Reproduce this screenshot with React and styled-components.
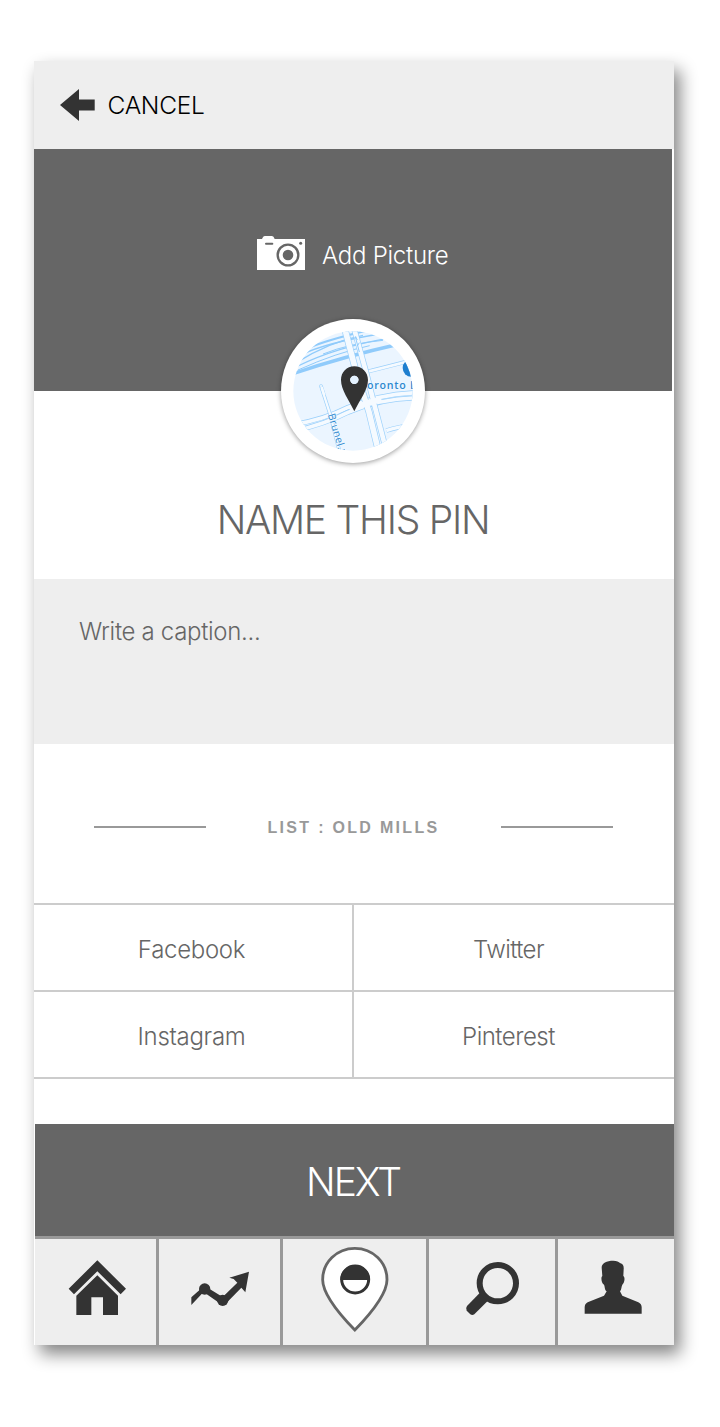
import React from "react";
import styled, { createGlobalStyle } from "styled-components";

const GlobalStyle = createGlobalStyle`
  * { box-sizing: border-box; }
  body { margin: 0; background: #fff; }
  button { font: inherit; color: inherit; border: 0; padding: 0; margin: 0; background: none; }
  svg { display: block; flex: none; }
`;

const Page = styled.div`
  min-height: 1427px;
  padding: 61px 0 82px 34px;
  background: #fff;
`;

const Screen = styled.main`
  width: 640px;
  height: 1284px;
  background: #fff;
  box-shadow: 6px 9px 16px rgba(0, 0, 0, 0.48);
  display: flex;
  flex-direction: column;
  font-family: Inter, "Liberation Sans", sans-serif;
  font-weight: 300;
  color: #666;
`;

const Label = styled.span`
  font-size: ${(p) => p.$size || 24}px;
  line-height: 1.2;
  letter-spacing: ${(p) => p.$track || 0}px;
  white-space: nowrap;
`;

const Header = styled.header`
  height: 88px;
  padding-left: 26px;
  display: flex;
  align-items: center;
  background: #eee;
`;

const CancelButton = styled.button`
  display: flex;
  align-items: center;
  gap: 12.5px;
  color: #000;

  ${Label} {
    padding-top: 2px;
  }
`;

const Picture = styled.section`
  position: relative;
  width: 638px;
  height: 242px;
  padding-top: 87px;
  background: #666;
`;

const AddPicture = styled.button`
  display: flex;
  align-items: center;
  gap: 17px;
  height: 34px;
  margin-left: 223px;
  color: #fff;

  ${Label} {
    padding-top: 6px;
  }
`;

const MapBadge = styled.div`
  position: absolute;
  left: 247px;
  top: 170px;
  width: 144px;
  height: 144px;
  padding: 12px;
  border-radius: 50%;
  background: #fff;
  box-shadow: 0 1px 5px rgba(0, 0, 0, 0.4);
`;

const NameSection = styled.section`
  height: 188px;
  padding: 106px 2px 0 0;
  text-align: center;
`;

const Caption = styled.section`
  height: 165px;
  padding: 39px 45px;
  background: #eee;
`;

const ListTitle = styled.section`
  height: 159px;
  padding: 7px 61px 0 60px;
  display: flex;
  align-items: center;
  justify-content: space-between;
  color: #999;
`;

const Rule = styled.span`
  width: 112px;
  height: 2px;
  background: #999;
`;

const ListName = styled.span`
  padding-top: 2px;
  font: bold 16px/20px "Liberation Sans", Arial, sans-serif;
  letter-spacing: 2.3px;
  white-space: nowrap;
`;

const ShareGrid = styled.section`
  display: grid;
  grid-template-columns: 318px 320px;
  grid-template-rows: 85px 85px;
  gap: 2px;
  height: 176px;
  padding: 2px 0;
  background: #ccc;
`;

const ShareButton = styled.button`
  display: flex;
  align-items: center;
  justify-content: center;
  background: #fff;
  padding: 5px ${(p) => p.$inset || 3}px 0 0;
`;

const NextButton = styled.button`
  height: 112px;
  margin: 45px 0 0 1px;
  background: #666;
  color: #fff;
  padding: 4px 3px 0 0;
`;

const NavBar = styled.nav`
  display: grid;
  grid-template-columns: 121px 121px 143px 126px 116px;
  column-gap: 3px;
  height: 109px;
  margin-left: 1px;
  padding-top: 3px;
  background: #999;
`;

const NavItem = styled.button`
  background: #eee;
`;

const ArrowIcon = () => (
  <svg width="35" height="32" viewBox="0 0 35 32" fill="#333">
    <path d="M0 16 19 0V10.5H34.7V21.5H19V32Z" />
  </svg>
);

const CameraIcon = () => (
  <svg width="48" height="34" viewBox="51 48 144 102">
    <path d="M51 57H66Q69 48 74 48H96Q101 48 104 57H195V150H51Z" fill="#fff" />
    <path d="M78 71H97" stroke="#666" strokeWidth="6" strokeLinecap="round" />
    <circle cx="182" cy="70" r="4.5" fill="#666" />
    <circle cx="144" cy="105" r="31" fill="none" stroke="#666" strokeWidth="7" />
    <circle cx="144" cy="105" r="16" fill="#666" />
  </svg>
);

const Road = ({ d, w }) => (
  <>
    <path d={d} stroke="#9bd0fb" strokeWidth={w} />
    <path d={d} stroke="#f5faff" strokeWidth={w - 4} />
  </>
);

const MapIcon = () => (
  <svg width="120" height="120" viewBox="60 63 360 360" fill="none">
    <defs>
      <clipPath id="mapClip">
        <circle cx="240" cy="243" r="179" />
      </clipPath>
    </defs>
    <g clipPath="url(#mapClip)">
      <rect x="60" y="63" width="360" height="360" fill="#ebf5ff" />
      <g stroke="#90cbfb">
        <path d="M60 191 Q210 140 380 102" strokeWidth="10" />
        <path d="M75 168 Q190 112 340 86" strokeWidth="4" />
        <path d="M70 158 Q170 95 270 76" strokeWidth="4" />
        <path d="M85 134 Q160 98 320 72" strokeWidth="5" />
        <path d="M98 117 Q160 90 280 62" strokeWidth="6" />
        <path d="M75 180 Q190 128 290 107" strokeWidth="3" />
        <path d="M150 132 Q230 100 330 91" strokeWidth="3" />
      </g>
      <Road d="M60 344 Q150 330 225 292 Q320 252 430 248" w={15} />
      <Road d="M60 364 Q155 343 225 307 Q330 264 430 264" w={15} />
      <Road d="M275 187 Q340 171 420 150" w={12} />
      <Road d="M340 362 Q375 350 430 344" w={14} />
      <Road d="M144 228 L172 315 L201 430" w={11} />
      <circle cx="144" cy="228" r="4.5" fill="#f5faff" stroke="#9bd0fb" strokeWidth="2" />
      <path d="M146 231 L154 256" stroke="#f5faff" strokeWidth="7" />
      <Road d="M215 55 L251 192 L288 306 L318 430" w={21} />
      <Road d="M243 55 L278 182 L306 292 L342 430" w={18} />
      <path d="M231 300 Q270 281 325 268" stroke="#f5faff" strokeWidth="18" />
      <path d="M247 80 L259 126 M242 87 L248 80 L253 90 M253 108 L259 98" stroke="#90cbfb" strokeWidth="3" />
      <circle cx="415" cy="174" r="26" fill="#1f7fcf" />
      <circle cx="424" cy="169" r="22" fill="#b9defb" />
      <path d="M402 160 Q400 182 415 190 M410 163V180" stroke="#1f7fcf" strokeWidth="5" />
      <g fill="#2d88d0" stroke="#f5faff" strokeWidth="3" paintOrder="stroke" fontFamily="'Open Sans', sans-serif">
        <text x="282" y="236" fontSize="32" fontWeight="600" letterSpacing="2.2">oronto L</text>
        <text transform="translate(164 314) rotate(73)" fontSize="31" fontWeight="500" letterSpacing="1">Brunel.</text>
      </g>
      <path d="M205 423 L216 420" stroke="#2d88d0" strokeWidth="4" />
    </g>
    <path
      fillRule="evenodd"
      fill="#333"
      d="M244 169C221 169 204 187 204 210C204 240 228 270 244 304C260 270 285 240 285 210C285 187 267 169 244 169ZM244 197A12.5 12.5 0 1 1 244 222A12.5 12.5 0 1 1 244 197Z"
    />
    <circle cx="244" cy="209.500" r="12.500" fill="#e4f2ff" />
  </svg>
);

const HomeIcon = () => (
  <svg width="121" height="106" viewBox="45 42 363 318" fill="#333">
    <path d="M232 106 318 191 302 208 232 139 162 208 146 191Z" />
    <path d="M232 151 294 212V270H249V217H214V270H169V212Z" />
  </svg>
);

const TrendIcon = () => (
  <svg width="121" height="106" viewBox="417 42 363 318" fill="#333">
    <path d="M514 217 548 187 558 185 608 216 652 173 641 162 628 158 687 140 676 202 664 188 617 236 598 234 556 205 545 207 514 240Z" />
    <circle cx="554" cy="192" r="17" />
    <circle cx="608" cy="226" r="17" />
  </svg>
);

const PinIcon = () => (
  <svg width="143" height="106" viewBox="39 42 429 318">
    <path
      d="M254.500 70C200 70 158 112 158 164C158 207 203 262 254.500 315C306 262 351 207 351 164C351 112 309 70 254.500 70Z"
      fill="#fff"
      stroke="#666"
      strokeWidth="8.500"
    />
    <circle cx="255.500" cy="163.500" r="40.500" fill="#fff" stroke="#333" strokeWidth="9" />
    <path d="M211 165A44.500 45 0 0 1 300 165Z" fill="#333" />
  </svg>
);

const SearchIcon = () => (
  <svg width="126" height="106" viewBox="27 42 378 318" fill="none" stroke="#333">
    <circle cx="233.500" cy="174.500" r="54.500" strokeWidth="18" />
    <path
      d="M179 204 203 228 163 268Q157 272 151 268L140 257Q136 250 141 243Z"
      fill="#333"
      stroke="none"
    />
  </svg>
);

const ProfileIcon = () => (
  <svg width="116" height="106" viewBox="414 42 348 318" fill="#333">
    <path d="M545 128C545 114 560 107 580 107C590 107 597 110 600 114C609 116 612 123 611 133L610 153C616 156 614 174 607 179C604 184 605 194 600 199L607 212L655 232Q665 237 665 247V266H494V247Q494 237 503 232L552 212L560 199C553 194 555 184 552 179C544 175 542 156 547 153Z" />
  </svg>
);

const networks = [
  { name: "Facebook", track: -0.3 },
  { name: "Twitter", track: -0.6, inset: 11 },
  { name: "Instagram", track: -0.3 },
  { name: "Pinterest", track: -0.5, inset: 11 },
];

const tabs = [
  ["Home", HomeIcon],
  ["Trends", TrendIcon],
  ["Pins", PinIcon],
  ["Search", SearchIcon],
  ["Profile", ProfileIcon],
];

export default function App() {
  return (
    <>
      <GlobalStyle />
      <Page>
        <Screen>
          <Header>
            <CancelButton>
              <ArrowIcon />
              <Label $size={24.5} $track={-0.3}>CANCEL</Label>
            </CancelButton>
          </Header>
          <Picture>
            <AddPicture>
              <CameraIcon />
              <Label $track={-0.25}>Add Picture</Label>
            </AddPicture>
            <MapBadge>
              <MapIcon />
            </MapBadge>
          </Picture>
          <NameSection>
            <Label $size={39} $track={-1.25}>NAME THIS PIN</Label>
          </NameSection>
          <Caption>
            <Label $track={-0.32}>Write a caption...</Label>
          </Caption>
          <ListTitle>
            <Rule />
            <ListName>LIST : OLD MILLS</ListName>
            <Rule />
          </ListTitle>
          <ShareGrid>
            {networks.map((n) => (
              <ShareButton key={n.name} $inset={n.inset}>
                <Label $track={n.track}>{n.name}</Label>
              </ShareButton>
            ))}
          </ShareGrid>
          <NextButton>
            <Label $size={39} $track={-2}>NEXT</Label>
          </NextButton>
          <NavBar>
            {tabs.map(([name, Icon]) => (
              <NavItem key={name} aria-label={name}>
                <Icon />
              </NavItem>
            ))}
          </NavBar>
        </Screen>
      </Page>
    </>
  );
}
